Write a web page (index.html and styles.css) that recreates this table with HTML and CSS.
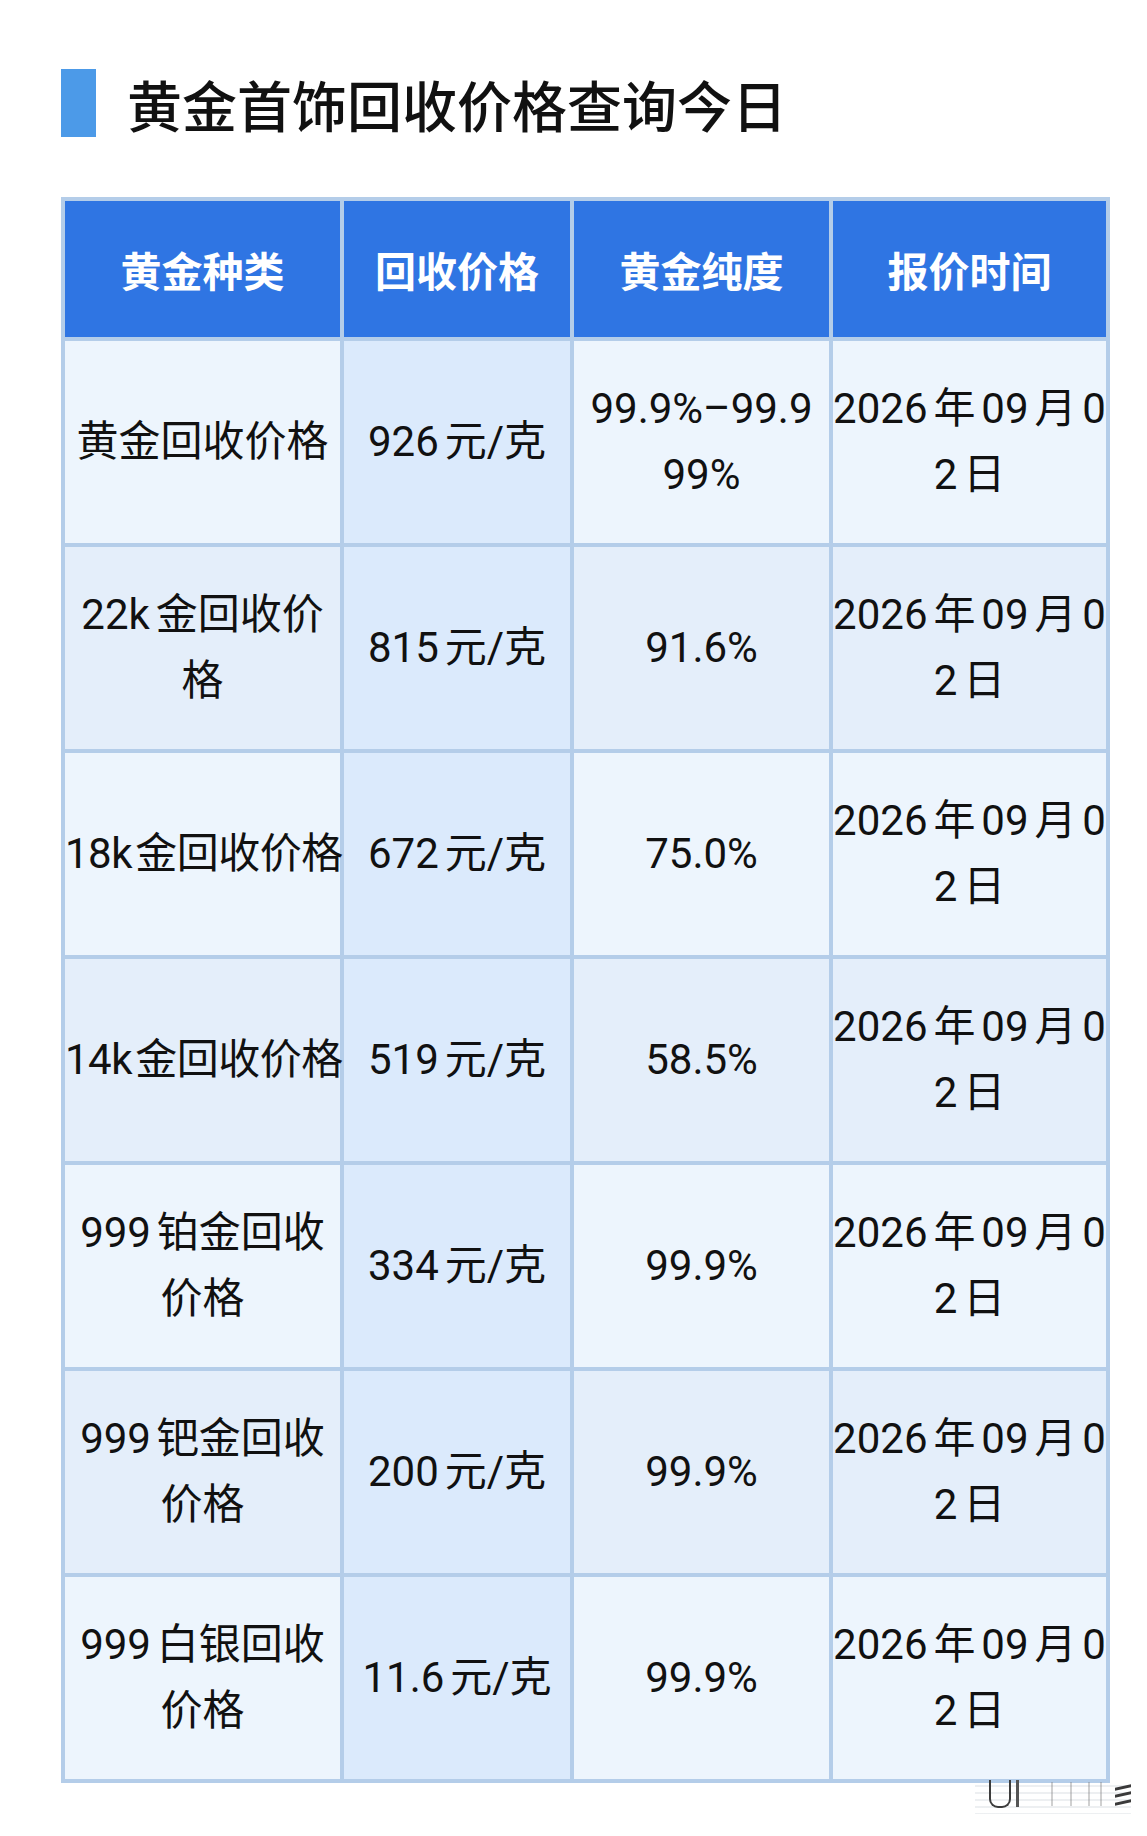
FILE: index.html
```html
<!DOCTYPE html>
<html lang="zh-CN">
<head>
<meta charset="utf-8">
<title>黄金首饰回收价格查询今日</title>
<link rel="stylesheet" href="styles.css">
</head>
<body>
<div class="page">
  <h1 class="title"><span class="bar"></span><span class="title-text">黄金首饰回收价格查询今日</span></h1>
  <table class="price-table">
    <colgroup><col class="c1"><col class="c2"><col class="c3"><col class="c4"></colgroup>
    <thead>
      <tr><th>黄金种类</th><th>回收价格</th><th>黄金纯度</th><th>报价时间</th></tr>
    </thead>
    <tbody>
      <tr>
        <td>黄金回收价格</td>
        <td><span class="nr">926</span>元/克</td>
        <td>99.9%–99.9<br>99%</td>
        <td><span class="nr">2026</span>年<span class="nb">09</span>月<span class="nl">0</span><br><span class="nr">2</span>日</td>
      </tr>
      <tr>
        <td><span class="nr">22k</span>金回收价<br>格</td>
        <td><span class="nr">815</span>元/克</td>
        <td>91.6%</td>
        <td><span class="nr">2026</span>年<span class="nb">09</span>月<span class="nl">0</span><br><span class="nr">2</span>日</td>
      </tr>
      <tr>
        <td class="tight"><span class="nr">18k</span>金回收价格</td>
        <td><span class="nr">672</span>元/克</td>
        <td>75.0%</td>
        <td><span class="nr">2026</span>年<span class="nb">09</span>月<span class="nl">0</span><br><span class="nr">2</span>日</td>
      </tr>
      <tr>
        <td class="tight"><span class="nr">14k</span>金回收价格</td>
        <td><span class="nr">519</span>元/克</td>
        <td>58.5%</td>
        <td><span class="nr">2026</span>年<span class="nb">09</span>月<span class="nl">0</span><br><span class="nr">2</span>日</td>
      </tr>
      <tr>
        <td><span class="nr">999</span>铂金回收<br>价格</td>
        <td><span class="nr">334</span>元/克</td>
        <td>99.9%</td>
        <td><span class="nr">2026</span>年<span class="nb">09</span>月<span class="nl">0</span><br><span class="nr">2</span>日</td>
      </tr>
      <tr>
        <td><span class="nr">999</span>钯金回收<br>价格</td>
        <td><span class="nr">200</span>元/克</td>
        <td>99.9%</td>
        <td><span class="nr">2026</span>年<span class="nb">09</span>月<span class="nl">0</span><br><span class="nr">2</span>日</td>
      </tr>
      <tr>
        <td><span class="nr">999</span>白银回收<br>价格</td>
        <td><span class="nr">11.6</span>元/克</td>
        <td>99.9%</td>
        <td><span class="nr">2026</span>年<span class="nb">09</span>月<span class="nl">0</span><br><span class="nr">2</span>日</td>
      </tr>
    </tbody>
  </table>
  <div class="wm" aria-hidden="true">
    <span class="wm-u"></span>
    <span class="wm-l"></span>
    <span class="wm-v v1"></span>
    <span class="wm-v v2"></span>
    <span class="wm-v v3"></span>
    <span class="wm-v v4"></span>
    <span class="wm-d d1"></span>
    <span class="wm-d d2"></span>
    <span class="wm-d d3"></span>
  </div>
</div>
</body>
</html>
```
FILE: styles.css
```css
html, body {
  margin: 0;
  padding: 0;
  background: #ffffff;
}

body {
  font-family: Roboto, "Noto Sans CJK SC", sans-serif;
  color: #111111;
}

.page {
  position: relative;
  width: 1147px;
  height: 1836px;
  box-sizing: border-box;
  padding: 69px 0 0 61px;
  overflow: hidden;
}

.title {
  display: flex;
  align-items: center;
  gap: 31px;
  margin: 0;
  height: 68px;
  font-family: "Noto Sans CJK SC", sans-serif;
  font-weight: 500;
  font-size: 55px;
  line-height: 68px;
  color: #111111;
}

.bar {
  flex: none;
  width: 35px;
  height: 68px;
  background: #4c9ae8;
}

.price-table {
  margin-top: 60px;
  border-collapse: collapse;
  table-layout: fixed;
  width: 1045px;
}

.c1 { width: 279px; }
.c2 { width: 230px; }
.c3 { width: 259px; }
.c4 { width: 277px; }

.price-table th,
.price-table td {
  border: 4px solid #b4cde9;
  padding: 35px 0;
  text-align: center;
  white-space: nowrap;
  font-size: 42px;
  line-height: 66px;
}

.price-table th {
  background: #2f75e3;
  color: #ffffff;
  font-family: "Noto Sans CJK SC", sans-serif;
  font-weight: 700;
  font-size: 41px;
}

.price-table td {
  font-weight: 400;
  color: #111111;
  background: #edf5fd;
}

.price-table tbody tr:nth-child(even) td {
  background: #e4eefa;
}

.price-table tbody tr td:nth-child(2) {
  background: #dbeafc;
}

.nr { margin-right: 0.14em; }
.nl { margin-left: 0.14em; }
.nb { margin: 0 0.14em; }

.price-table td.tight {
  letter-spacing: -0.5px;
}
.price-table td.tight .nr {
  margin-right: 0.08em;
}

/* faint watermark at bottom right */
.wm {
  position: absolute;
  left: 975px;
  top: 1780px;
  width: 156px;
  height: 34px;
  background: repeating-linear-gradient(to bottom, rgba(200, 208, 216, 0) 0 5px, rgba(190, 198, 206, 0.28) 5px 7px);
  filter: blur(0.5px);
}

.wm-u {
  position: absolute;
  left: 14px;
  top: 0;
  width: 18px;
  height: 26px;
  border: 2px solid #3c3c3c;
  border-top: 0;
  border-radius: 0 0 9px 9px;
}

.wm-l {
  position: absolute;
  left: 41px;
  top: 0;
  width: 3px;
  height: 27px;
  background: #555555;
}

.wm-v {
  position: absolute;
  top: 2px;
  width: 2px;
  height: 24px;
  background: rgba(120, 120, 120, 0.35);
}
.v1 { left: 76px; }
.v2 { left: 95px; }
.v3 { left: 113px; }
.v4 { left: 125px; }

.wm-d {
  position: absolute;
  right: 0;
  width: 16px;
  height: 3px;
  background: #3a3a3a;
  transform: skewY(-12deg);
}
.d1 { top: 6px; }
.d2 { top: 13px; }
.d3 { top: 21px; }
```
